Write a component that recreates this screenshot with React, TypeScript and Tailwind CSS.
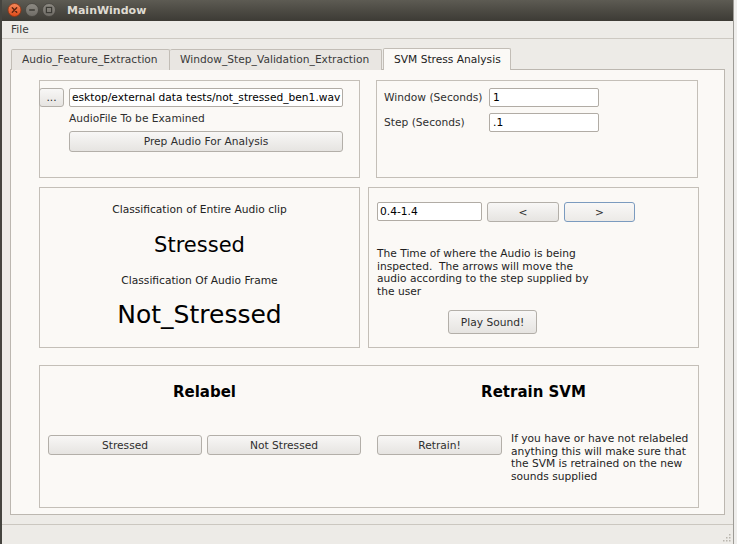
import type { ReactNode } from 'react';
import clsx from 'clsx';

function Btn({ className, children, focus }: { className?: string; children: ReactNode; focus?: boolean }) {
  return (
    <button
      className={clsx(
        'flex shrink-0 items-center justify-center rounded-[3px] border bg-linear-to-b from-[#f8f7f6] to-[#e6e4e1] text-[#2e2e2e] leading-[13px]',
        focus ? 'border-[#7b9bbf] from-[#f9f8f7] to-[#eceae7]' : 'border-[#b3afa9]',
        className
      )}
    >
      {children}
    </button>
  );
}

function Field({ className, children }: { className?: string; children: ReactNode }) {
  return (
    <div
      className={clsx(
        'flex shrink-0 items-center overflow-hidden whitespace-nowrap rounded-[2px] border border-[#b1aca5] bg-white pl-[2px] text-black leading-[13px]',
        className
      )}
    >
      {children}
    </div>
  );
}

function Box({ className, children }: { className?: string; children?: ReactNode }) {
  return <div className={clsx('shrink-0 border border-[#c4bfb8] bg-[#fbf9f6]', className)}>{children}</div>;
}

function WindowButtons() {
  return (
    <svg width="56" height="21" viewBox="0 0 56 21" className="shrink-0">
      <defs>
        <linearGradient id="close" x1="0" y1="0" x2="0" y2="1">
          <stop offset="0" stopColor="#f58a5c" />
          <stop offset="1" stopColor="#df4a19" />
        </linearGradient>
        <linearGradient id="grey" x1="0" y1="0" x2="0" y2="1">
          <stop offset="0" stopColor="#8e8b84" />
          <stop offset="1" stopColor="#6f6c66" />
        </linearGradient>
      </defs>
      <circle cx="12.5" cy="10" r="6.5" fill="url(#close)" stroke="#8c3414" strokeWidth="0.8" />
      <path d="M10.3 7.8 L14.7 12.2 M14.7 7.8 L10.3 12.2" stroke="#5a2410" strokeWidth="1.4" strokeLinecap="round" />
      <circle cx="30" cy="10" r="6.5" fill="url(#grey)" stroke="#45433e" strokeWidth="0.8" />
      <path d="M27.2 10 H32.8" stroke="#3b3a35" strokeWidth="1.5" />
      <circle cx="47" cy="10" r="6.5" fill="url(#grey)" stroke="#45433e" strokeWidth="0.8" />
      <rect x="44.4" y="7.4" width="5.2" height="5.2" fill="none" stroke="#3b3a35" strokeWidth="1.2" />
    </svg>
  );
}

function SizeGrip() {
  const dots = [
    [8, 2],
    [5, 5],
    [8, 5],
    [2, 8],
    [5, 8],
    [8, 8],
  ];
  return (
    <svg width="11" height="11" viewBox="0 0 11 11">
      {dots.map(([x, y]) => (
        <rect key={`${x}-${y}`} x={x} y={y} width="1.5" height="1.5" fill="#b9b5ae" />
      ))}
    </svg>
  );
}

export default function App() {
  return (
    <div className="flex h-[544px] w-[737px] overflow-hidden bg-[#edebe7] font-['DejaVu_Sans',sans-serif] text-[10.667px] text-[#2f2f2f]">
      {/* bord gauche */}
      <div className="w-[2px] shrink-0 bg-[#45443f]" />

      {/* fenetre principale */}
      <div className="flex w-[731px] shrink-0 flex-col">
        {/* barre de titre */}
        <div className="flex h-[21px] shrink-0 items-center bg-linear-to-b from-[#5d5b53] to-[#3d3b35]">
          <WindowButtons />
          <span className="ml-[9px] text-[11px] font-bold leading-[21px] text-[#dfdbd2]">MainWindow</span>
        </div>

        {/* menu */}
        <div className="flex h-[18px] shrink-0 items-center border-b border-[#cdc9c2] pl-[9px] text-[#3c3c3c]">
          File
        </div>

        {/* onglets */}
        <div className="relative z-10 mt-[9px] flex h-[22px] shrink-0 items-end pl-[9px] text-[#3a3a3a]">
          <div className="flex h-[21px] w-[159px] items-center rounded-t-[2px] border border-b-0 border-[#c2bdb6] bg-[#e9e6e2] pl-[10px]">
            Audio_Feature_Extraction
          </div>
          <div className="flex h-[21px] w-[212px] items-center rounded-t-[2px] border border-b-0 border-l-0 border-[#c2bdb6] bg-[#e9e6e2] pl-[10px]">
            Window_Step_Validation_Extraction
          </div>
          <div className="ml-px flex h-[22px] w-[128px] items-center rounded-t-[2px] border border-b-0 border-[#c2bdb6] bg-[#fbf9f6] pl-[10px] text-[#222]">
            SVM Stress Analysis
          </div>
        </div>

        {/* panneau */}
        <div className="-mt-px ml-[8px] flex h-[446px] w-[715px] shrink-0 flex-col border border-[#bcb7b0] bg-[#fbf9f6] pl-[28px] pt-[10px]">
          {/* ligne 1 */}
          <div className="flex">
            <Box className="h-[98px] w-[321px]">
              <div className="flex pt-[7px]">
                <Btn className="-ml-px h-[19px] w-[25px]">...</Btn>
                <Field className="ml-[5px] h-[19px] w-[274px]">esktop/external data tests/not_stressed_ben1.wav</Field>
              </div>
              <div className="ml-[29px] mt-[5px] leading-[13px]">AudioFile To be Examined</div>
              <Btn className="ml-[29px] mt-[6px] h-[21px] w-[274px]">Prep Audio For Analysis</Btn>
            </Box>

            <Box className="ml-[16px] h-[98px] w-[322px]">
              <div className="flex items-center pl-[7px] pt-[7px]">
                <span className="w-[105px] shrink-0">Window (Seconds)</span>
                <Field className="h-[19px] w-[110px] pl-[3px]">1</Field>
              </div>
              <div className="mt-[6px] flex items-center pl-[7px]">
                <span className="w-[105px] shrink-0">Step (Seconds)</span>
                <Field className="h-[19px] w-[110px] pl-[3px]">.1</Field>
              </div>
            </Box>
          </div>

          {/* ligne 2 */}
          <div className="mt-[9px] flex">
            <Box className="flex h-[161px] w-[321px] flex-col items-center">
              <div className="mt-[15px] leading-[13px] text-[#222]">Classification of Entire Audio clip</div>
              <div className="mt-[17px] text-[21px] leading-[25px] text-black">Stressed</div>
              <div className="mt-[16px] leading-[13px] text-[#222]">Classification Of Audio Frame</div>
              <div className="mt-[13px] text-[25px] leading-[30px] text-black">Not_Stressed</div>
            </Box>

            <Box className="ml-[8px] h-[161px] w-[331px]">
              <div className="flex pl-[8px] pt-[14px]">
                <Field className="h-[19px] w-[105px]">0.4-1.4</Field>
                <Btn className="ml-[5px] h-[20px] w-[72px]">&lt;</Btn>
                <Btn focus className="ml-[5px] h-[20px] w-[71px]">&gt;</Btn>
              </div>
              <p className="mt-[26px] whitespace-pre pl-[8px] leading-[12.5px] text-[#1e1e1e]">
                The Time of where the Audio is being
                <br />
                {'inspected.  The arrows will move the'}
                <br />
                audio according to the step supplied by
                <br />
                the user
              </p>
              <Btn className="ml-[79px] mt-[12px] h-[24px] w-[89px]">Play Sound!</Btn>
            </Box>
          </div>

          {/* ligne 3 */}
          <Box className="mt-[17px] flex h-[143px] w-[660px]">
            <div className="flex w-[329px] flex-col">
              <div className="mt-[17px] text-center text-[15px] font-bold leading-[18px] text-black">Relabel</div>
              <div className="mt-[34px] flex pl-[8px]">
                <Btn className="h-[20px] w-[154px]">Stressed</Btn>
                <Btn className="ml-[5px] h-[20px] w-[154px]">Not Stressed</Btn>
              </div>
            </div>
            <div className="flex w-[329px] flex-col">
              <div className="mt-[17px] text-center text-[15px] font-bold leading-[18px] text-black">Retrain SVM</div>
              <div className="mt-[34px] flex items-start pl-[8px]">
                <Btn className="h-[20px] w-[125px]">Retrain!</Btn>
                <p className="-mt-[2px] ml-[9px] leading-[12.5px] text-[#1e1e1e]">
                  If you have or have not relabeled
                  <br />
                  anything this will make sure that
                  <br />
                  the SVM is retrained on the new
                  <br />
                  sounds supplied
                </p>
              </div>
            </div>
          </Box>
        </div>

        {/* barre d'etat */}
        <div className="mt-[9px] flex h-[20px] shrink-0 items-end justify-end border-t border-[#cbc7c0] pb-px pr-px">
          <SizeGrip />
        </div>
      </div>

      {/* fenetre derriere */}
      <div className="w-[4px] shrink-0 border-l border-[#9d9b96] bg-[#efeeec]" />
    </div>
  );
}
